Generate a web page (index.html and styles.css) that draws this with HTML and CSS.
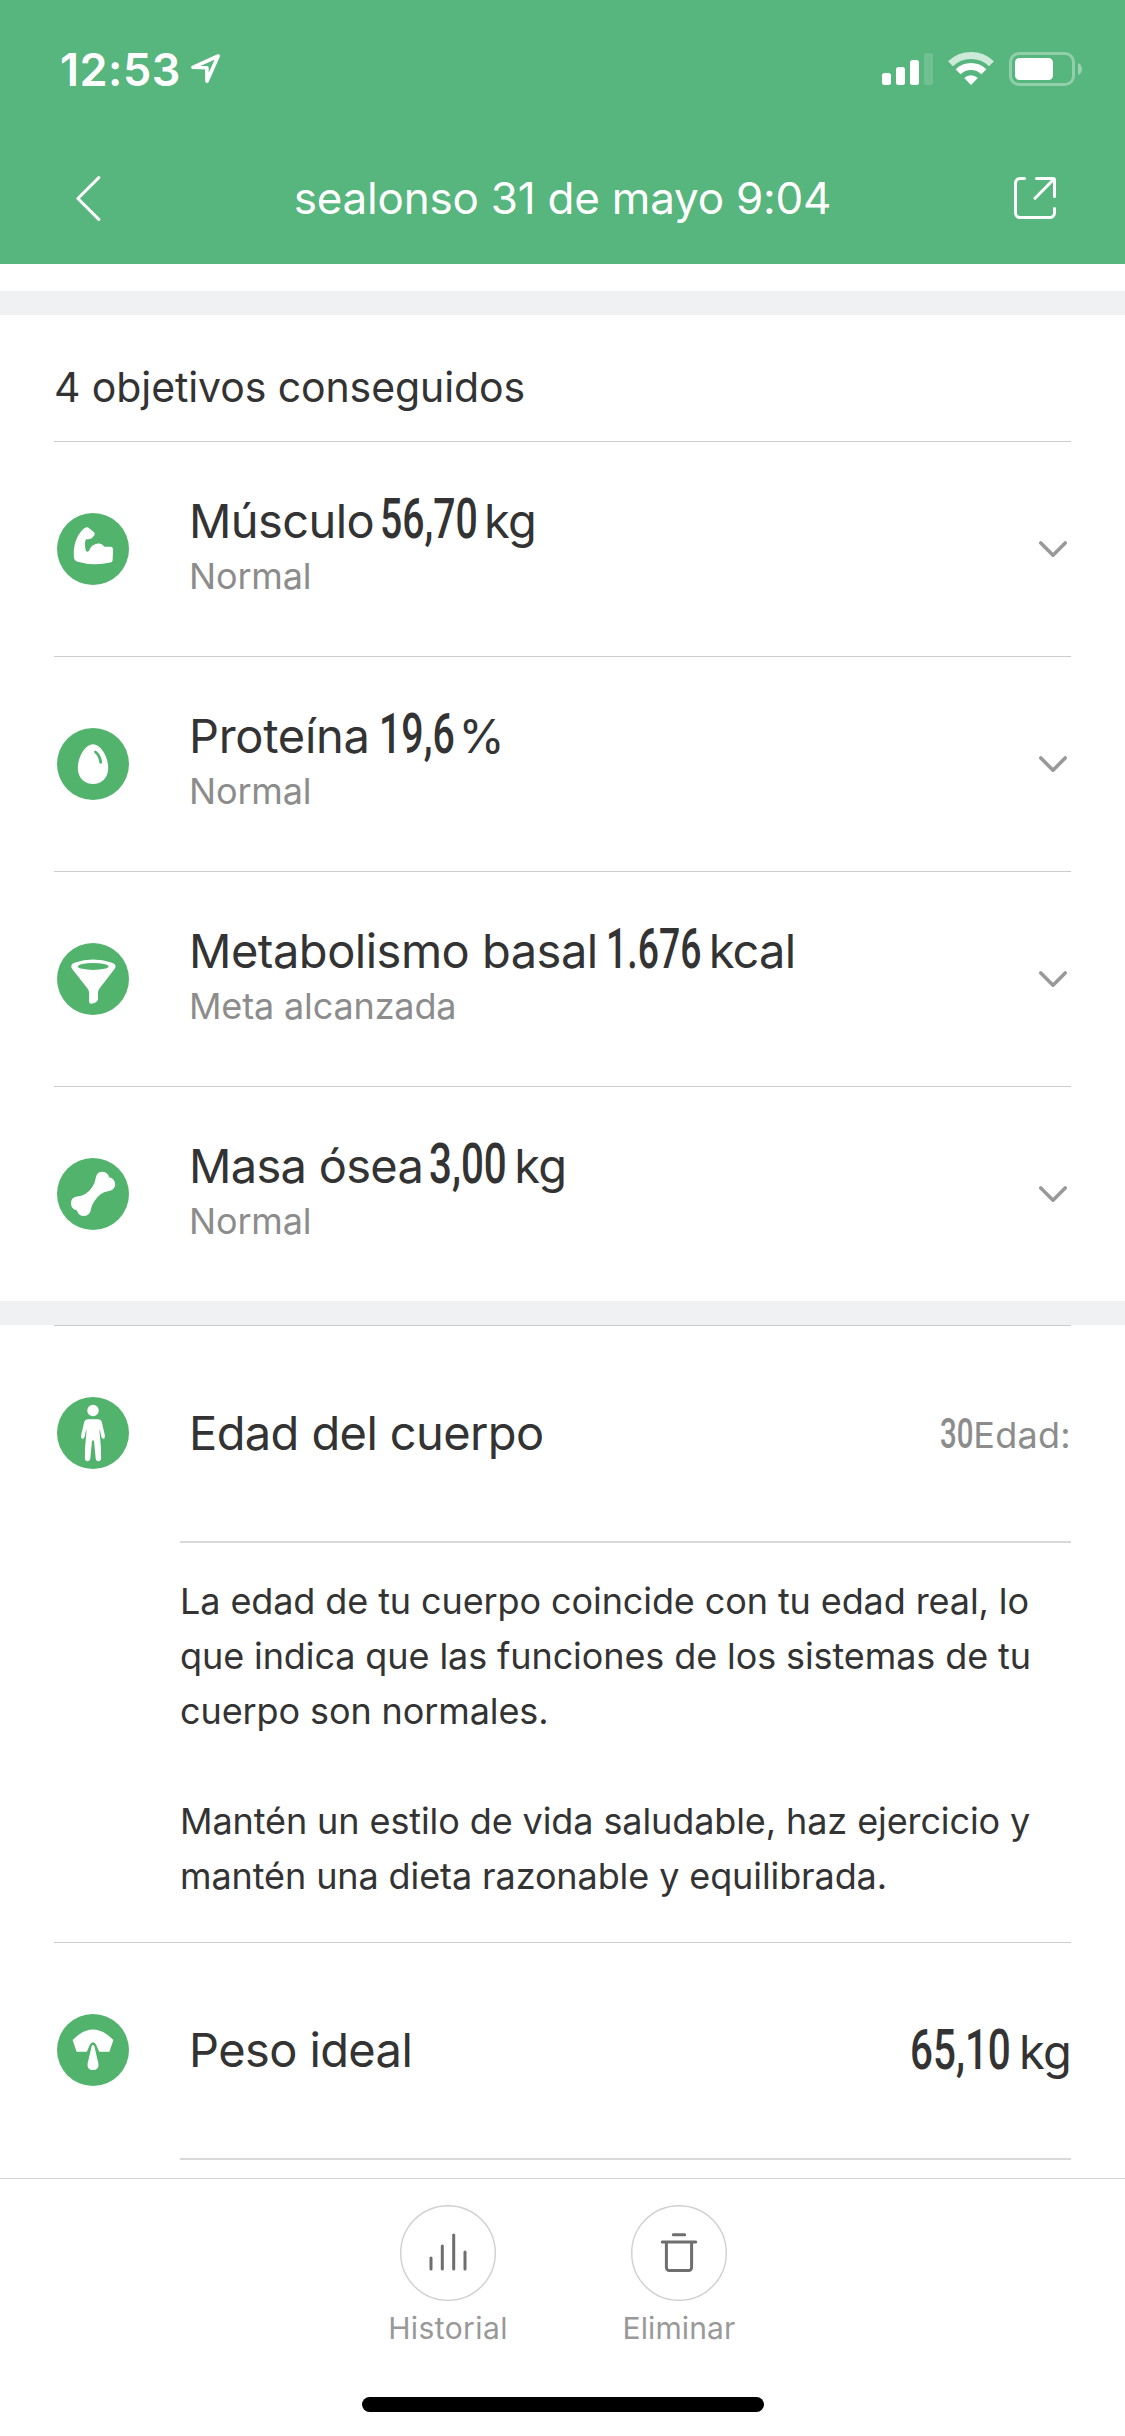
FILE: index.html
```html
<!DOCTYPE html>
<html lang="es">
<head>
<meta charset="utf-8">
<title>sealonso 31 de mayo 9:04</title>
<link rel="stylesheet" href="styles.css">
</head>
<body>
<div class="screen">
  <header class="header">
    <div class="status">
      <div class="status__left">
        <span class="status__time">12:53</span>
        <svg class="status__location" width="32" height="32" viewBox="0 0 32 32"><path d="M28.2 3 2.9 14.3l14 .4.1 13.6z"/></svg>
      </div>
      <svg width="204" height="38" viewBox="0 0 204 38" fill="#fff">
        <rect x="2" y="23" width="9" height="12" rx="2.5"/>
        <rect x="16" y="17" width="9" height="18" rx="2.5"/>
        <rect x="30" y="10" width="9" height="25" rx="2.5"/>
        <rect x="44" y="3" width="9" height="32" rx="2.5" opacity=".15"/>
        <path d="M70.5 13.8a29.5 29.5 0 0 1 41 0" fill="none" stroke="#fff" stroke-width="7" opacity=".7"/>
        <path d="M78.1 21.7a18.5 18.5 0 0 1 25.8 0" fill="none" stroke="#fff" stroke-width="7"/>
        <path d="M91 35l-6.8-7a10 10 0 0 1 13.6 0z"/>
        <rect x="130.5" y="3.5" width="63" height="31" rx="8.5" fill="none" stroke="#fff" stroke-width="3" opacity=".35"/>
        <rect x="135" y="8" width="38" height="22" rx="4.5"/>
        <path d="M198 13q4 2 4 6t-4 6z" opacity=".4"/>
      </svg>
    </div>
    <nav class="nav">
      <svg width="25" height="45" viewBox="0 0 25 45" class="nav__icon"><path d="M22.8 1.6 1.9 22.5l20.9 20.9"/></svg>
      <h1 class="nav__title">sealonso 31 de mayo 9:04</h1>
      <svg width="42" height="42" viewBox="0 0 42 42" class="nav__icon"><path d="M10.5 1.5H6A4.5 4.5 0 0 0 1.5 6v30A4.5 4.5 0 0 0 6 40.5h30a4.5 4.5 0 0 0 4.5-4.5v-4.5M22.5 1.5H39A1.5 1.5 0 0 1 40.5 3v16.5M39.5 2.5 21 21.3"/></svg>
    </nav>
  </header>

  <main class="content">
    <div class="divider divider--top"></div>

    <section class="section">
      <h2 class="section__title">4 objetivos conseguidos</h2>

      <article class="metric metric--muscle">
        <svg class="metric__icon" viewBox="0 0 72 72"><circle cx="36" cy="36" r="36"/><path d="M26.3 15.9Q29.7 13 32.5 15.6L37 19.2Q38.4 20.6 37.3 22.3L35 25Q34.3 25.8 33 25.9L28.8 26.4Q27.2 31 28.7 37 29 38.8 30.4 38.8 31.8 38.8 32.4 37 34.5 31 41 30.4 45 30.2 47.5 33.8L54 33.8Q56 33.9 56.1 36.5L55.6 47.5Q55.5 49.2 53.5 49.6 36 53.5 19.8 48.6 17.3 47.6 17 45 15.3 27 26.3 15.9Z"/></svg>
        <div class="metric__body">
          <p class="metric__line"><span class="metric__name">Músculo</span><span class="num"><span>56,70</span></span><span class="unit">kg</span></p>
          <p class="metric__status">Normal</p>
        </div>
        <svg class="chevron" width="28" height="17" viewBox="0 0 28 17"><path d="M1.8 2 14 14.2 26.2 2"/></svg>
      </article>

      <article class="metric metric--protein">
        <svg class="metric__icon" viewBox="0 0 72 72"><circle cx="36" cy="36" r="36"/><path d="M36 16.3C44 16.3 51.2 29 51.2 40 51.2 50 44.5 56 36 56S20.8 50 20.8 40C20.8 29 28 16.3 36 16.3Z"/><path class="metric__cut" d="M38.5 24Q42.8 27.5 43.8 34.3"/></svg>
        <div class="metric__body">
          <p class="metric__line"><span class="metric__name">Proteína</span><span class="num"><span>19,6</span></span><span class="unit">%</span></p>
          <p class="metric__status">Normal</p>
        </div>
        <svg class="chevron" width="28" height="17" viewBox="0 0 28 17"><path d="M1.8 2 14 14.2 26.2 2"/></svg>
      </article>

      <article class="metric metric--basal">
        <svg class="metric__icon" viewBox="0 0 72 72"><circle cx="36" cy="36" r="36"/><path d="M14.2 23Q14.5 20.8 17.5 19.8 36 13 55 19.8 58.3 20.8 58.6 23 58.6 24.5 57.5 26L42.5 45.5Q41 47.3 41 49.5V56Q40.8 59.5 34.5 60.7 32.1 60.9 32.1 58.5V49.5Q32.1 47.3 30.5 45.5L15.2 26Q14.2 24.5 14.2 23Z"/><ellipse class="metric__hole" cx="36.2" cy="23.4" rx="15.4" ry="3.5"/></svg>
        <div class="metric__body">
          <p class="metric__line"><span class="metric__name">Metabolismo basal</span><span class="num"><span>1.676</span></span><span class="unit">kcal</span></p>
          <p class="metric__status">Meta alcanzada</p>
        </div>
        <svg class="chevron" width="28" height="17" viewBox="0 0 28 17"><path d="M1.8 2 14 14.2 26.2 2"/></svg>
      </article>

      <article class="metric metric--bone">
        <svg class="metric__icon" viewBox="0 0 72 72"><circle cx="36" cy="36" r="36"/><path d="M38.5 21Q39.5 13.9 45 13.8 50.5 13.8 52.3 19.3 58.3 21 58.2 27 57.5 32.5 51 33.3 43 34.5 37.5 43 34.5 47 34 51 33 57.8 27 58 21.5 58 20 52.5 14 51 13.9 45 14.2 39.5 20 38.6 29 38 35 29.5 38 25.5 38.5 21Z"/></svg>
        <div class="metric__body">
          <p class="metric__line"><span class="metric__name">Masa ósea</span><span class="num"><span>3,00</span></span><span class="unit">kg</span></p>
          <p class="metric__status">Normal</p>
        </div>
        <svg class="chevron" width="28" height="17" viewBox="0 0 28 17"><path d="M1.8 2 14 14.2 26.2 2"/></svg>
      </article>
    </section>

    <div class="divider"></div>

    <section class="section">
      <article class="info info--age">
        <svg class="metric__icon" viewBox="0 0 72 72"><circle cx="36" cy="36" r="36"/><circle class="metric__fill" cx="36" cy="13.5" r="5.7"/><path d="M31.2 22.3H40.8Q44 22.3 44.9 25.5L47.7 37.5Q48.3 41.5 46.6 41.8 45 42 44.3 39.5L42.8 32Q42.3 34 43 40 44.5 52 44.1 61.5 43.9 64.3 41.5 64.3 39.1 64.3 38.7 61.5L37 44Q36 42.3 35 44L33.3 61.5Q32.9 64.3 30.5 64.3 28.1 64.3 27.9 61.5 27.5 52 29 40 29.7 34 29.2 32L27.7 39.5Q27 42 25.4 41.8 23.7 41.5 24.3 37.5L27.1 25.5Q28 22.3 31.2 22.3Z"/></svg>
        <h3 class="metric__name info__name">Edad del cuerpo</h3>
        <p class="info__value info__value--soft"><span class="num"><span>30</span></span><span>Edad:</span></p>
      </article>
      <div class="description">
        <p>La edad de tu cuerpo coincide con tu edad real, lo que indica que las funciones de los sistemas de tu cuerpo son normales.</p>
        <p>Mantén un estilo de vida saludable, haz ejercicio y mantén una dieta razonable y equilibrada.</p>
      </div>
      <article class="info info--ideal">
        <svg class="metric__icon" viewBox="0 0 72 72"><circle cx="36" cy="36" r="36"/><path d="M15.6 26Q36 4.8 56.4 26L52.4 37.7H42.2L39 30.5Q36 26 33 30.5L29.8 37.7H19.6Z"/><path d="M36 31Q37.5 31 38 35L41.5 50Q41.8 56 36 56 30.2 56 30.5 50L34 35Q34.5 31 36 31Z"/></svg>
        <h3 class="metric__name info__name">Peso ideal</h3>
        <p class="info__value"><span class="num"><span>65,10</span></span><span class="unit">kg</span></p>
      </article>
      <div class="description description--cut"></div>
    </section>
  </main>

  <footer class="footer">
    <div class="actions">
      <div class="action">
        <svg class="action__icon" viewBox="0 0 96 96"><circle cx="48" cy="48" r="47.3"/><path d="M31 64V53M42.3 64V41M53.7 64V30M65 64V47"/></svg>
        <span class="action__label action__label--wide">Historial</span>
      </div>
      <div class="action">
        <svg class="action__icon" viewBox="0 0 96 96"><circle cx="48" cy="48" r="47.3"/><path d="M42.3 29.8h11.4M31.3 37h33.4M35.4 37.5v25a3 3 0 0 0 3 3h19.2a3 3 0 0 0 3-3v-25"/></svg>
        <span class="action__label">Eliminar</span>
      </div>
    </div>
    <div class="home-bar"></div>
  </footer>
</div>
</body>
</html>
```
FILE: styles.css
```css
* {
  box-sizing: border-box;
  margin: 0;
  padding: 0;
}

body {
  background: #fff;
  color: #333;
  font-family: Inter, "Liberation Sans", sans-serif;
  font-weight: 400;
}

svg {
  display: block;
  flex: none;
}

.screen {
  display: flex;
  flex-direction: column;
  width: 1125px;
  height: 2436px;
  overflow: hidden;
}

/* Header */
.header {
  flex: none;
  height: 264px;
  background: #57b57e;
  color: #fff;
}

.status {
  display: flex;
  align-items: center;
  justify-content: space-between;
  height: 132px;
  padding: 6px 41px 0 60px;
}

.status__left {
  display: flex;
  align-items: center;
  gap: 9px;
}

.status__time {
  font-size: 45px;
  font-weight: 600;
  letter-spacing: 0.5px;
}

.status__location {
  fill: none;
  stroke: #fff;
  stroke-width: 3.6;
  stroke-linejoin: round;
}

.nav {
  display: flex;
  align-items: center;
  justify-content: space-between;
  height: 132px;
  padding: 0 69px 0 76px;
}

.nav__title {
  margin-left: 10px;
  font-size: 44px;
  font-weight: 400;
  letter-spacing: -0.22px;
}

.nav__icon {
  fill: none;
  stroke: #fff;
  stroke-width: 3;
  stroke-linecap: round;
  stroke-linejoin: round;
}

/* Content */
.content {
  flex: 1;
  min-height: 0;
  overflow: hidden;
}

.divider {
  height: 24px;
  background: #f0f1f3;
}

.divider--top {
  margin-top: 27px;
}

.section {
  padding: 0 54px;
}

.section__title {
  height: 126px;
  padding-top: 18px;
  font-size: 41px;
  font-weight: 400;
  line-height: 108px;
  letter-spacing: -0.1px;
}

/* Metric rows */
.metric {
  --squeeze: 0.712;
  --num-width: 104px;
  display: flex;
  align-items: center;
  height: 215px;
  padding: 0 4px 0 3px;
  border-top: 1px solid #ccc;
}

.metric--protein {
  --squeeze: 0.714;
  --num-width: 80px;
}

.metric--basal {
  --squeeze: 0.68;
  --num-width: 103px;
}

.metric--bone {
  --squeeze: 0.732;
  --num-width: 85px;
}

.metric__icon {
  width: 72px;
  height: 72px;
  margin-right: 60px;
  fill: #52b36d;
}

.metric__icon path,
.metric__icon .metric__fill {
  fill: #fff;
}

.metric__icon .metric__cut {
  fill: none;
  stroke: #52b36d;
  stroke-width: 2.8;
  stroke-linecap: round;
}

.metric__icon .metric__hole {
  fill: #52b36d;
}

.metric__body {
  flex: 1;
  padding-bottom: 7px;
}

.metric__line {
  display: flex;
  align-items: baseline;
  height: 56px;
  font-size: 47px;
  line-height: 56px;
}

.metric__name {
  margin-right: 6px;
  font-size: 47px;
  font-weight: 400;
  letter-spacing: -0.6px;
}

.metric--protein .metric__name {
  margin-right: 9px;
  letter-spacing: -0.3px;
}

.metric--basal .metric__name {
  margin-right: 8px;
  letter-spacing: -0.5px;
}

.metric--bone .metric__name {
  letter-spacing: -0.7px;
}

/* Condensed figures: the inner span is narrowed, the outer one reserves its width */
.num {
  flex: none;
  width: var(--num-width);
  font-family: Roboto, "Liberation Sans", sans-serif;
  font-size: 55px;
  font-weight: 500;
  line-height: 40px;
  white-space: nowrap;
}

.num span {
  display: inline-block;
  transform: scaleX(var(--squeeze));
  transform-origin: 0 50%;
}

.unit {
  letter-spacing: -0.8px;
}

.metric__status {
  margin-top: 5px;
  color: #8c8c8c;
  font-size: 36px;
  line-height: 44px;
  letter-spacing: -0.15px;
}

.chevron {
  fill: none;
  stroke: #999;
  stroke-width: 3.6;
  stroke-linecap: round;
  stroke-linejoin: round;
}

/* Info rows */
.info {
  display: flex;
  align-items: center;
  height: 216px;
  padding: 0 0 2px 3px;
  border-top: 1px solid #ccc;
}

.info--age {
  --squeeze: 0.7;
  --num-width: 33px;
}

.info--ideal {
  --squeeze: 0.734;
  --num-width: 109px;
}

.info__name {
  flex: 1;
}

.info__value {
  display: flex;
  align-items: baseline;
  padding-top: 4px;
  font-size: 47px;
  line-height: 56px;
}

.info__value--soft {
  color: #8c8c8c;
  font-size: 36px;
  letter-spacing: 0.3px;
}

.info__value--soft .num {
  font-size: 42px;
  letter-spacing: 0;
}

.description {
  height: 401px;
  margin-left: 126px;
  padding-top: 31px;
  border-top: 2px solid #d9d9d9;
  font-size: 36px;
  line-height: 55px;
  letter-spacing: -0.1px;
}

.description p + p {
  margin-top: 55px;
}

.description--cut {
  height: 20px;
  padding: 0;
}

/* Footer */
.footer {
  flex: none;
  height: 258px;
  border-top: 1px solid #d5d5d5;
  background: #fff;
}

.actions {
  display: flex;
  justify-content: center;
  gap: 91px;
  height: 218px;
  padding: 26px 0 0 2px;
}

.action {
  display: flex;
  flex-direction: column;
  align-items: center;
  gap: 9px;
  width: 140px;
}

.action__icon {
  width: 96px;
  height: 96px;
  fill: none;
  stroke: #6e6e6e;
  stroke-width: 3;
  stroke-linecap: round;
  stroke-linejoin: round;
}

.action__icon circle {
  stroke: #d0d0d0;
  stroke-width: 1.4;
}

.action__label {
  color: #999;
  font-size: 30px;
  line-height: 36px;
  letter-spacing: 0.1px;
}

.action__label--wide {
  letter-spacing: 0.4px;
}

.home-bar {
  width: 402px;
  height: 15px;
  margin: 0 auto;
  border-radius: 8px;
  background: #000;
}
```
